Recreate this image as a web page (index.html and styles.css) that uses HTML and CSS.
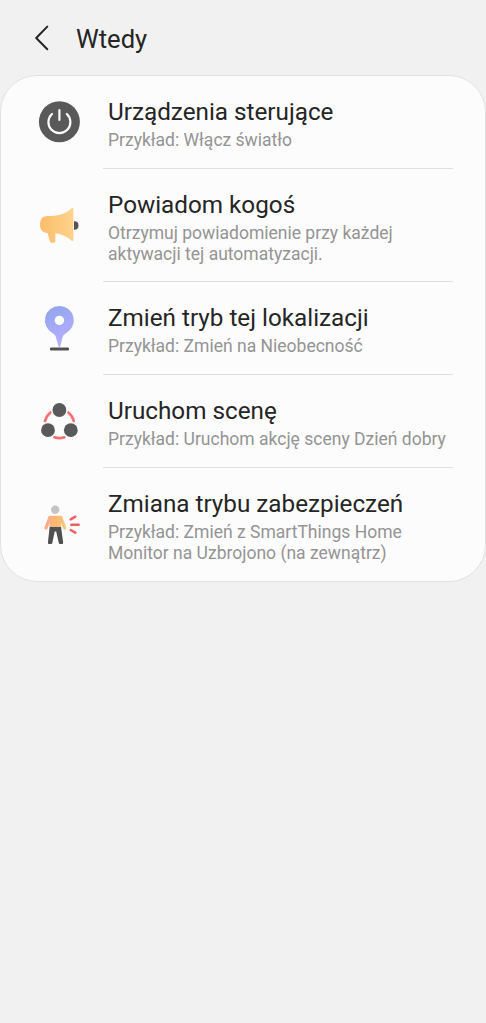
FILE: index.html
```html
<!DOCTYPE html>
<html lang="pl">
<head>
<meta charset="utf-8">
<title>Wtedy</title>
<link rel="stylesheet" href="styles.css">
</head>
<body>
<header class="bar">
  <svg class="back" width="16" height="26" viewBox="0 0 16 26"><path d="M13.3 1.6 2.2 13l11.1 11.2" fill="none" stroke="#252525" stroke-width="2" stroke-linecap="round" stroke-linejoin="round"/></svg>
  <h1 class="heading">Wtedy</h1>
</header>
<main class="card">
  <section class="row">
    <svg class="icon" viewBox="0 2 60 60">
      <circle cx="29.4" cy="31.8" r="20.5" fill="#595959"/>
      <path d="M22 24a11 11 0 1 0 14.800 0M29.400 20v10" fill="none" stroke="#fafafa" stroke-width="2.200" stroke-linecap="round"/>
    </svg>
    <div class="text"><h2 class="title">Urządzenia sterujące</h2><p class="note">Przykład: Włącz światło</p></div>
  </section>
  <section class="row tall">
    <svg class="icon" viewBox="0 0 60 60">
      <defs><linearGradient id="horn" x1="0" y1="0" x2="1" y2="0"><stop offset="0" stop-color="#f9bd6c"/><stop offset="1" stop-color="#ffd38c"/></linearGradient></defs>
      <path d="M44 26.300h.5a4 4.200 0 0 1 0 8.400H44z" fill="#555"/>
      <path d="M17 21c11 0 18-1.500 24.200-7.500 1-.9 2.200-.5 2.200.8v30.500c0 1.300-1.200 1.600-2.200.7-4.300-4-9.500-6.400-15.800-7.300v7.600c0 1.300-.5 1.900-1.800 1.900h-2c-1 0-1.500-.6-1.800-1.500L17.500 38c-5 0-7.500-3.800-7.500-8.500S12.500 21 17 21z" fill="url(#horn)"/>
    </svg>
    <div class="text"><h2 class="title">Powiadom kogoś</h2><p class="note">Otrzymuj powiadomienie przy każdej<br>aktywacji tej automatyzacji.</p></div>
  </section>
  <section class="row">
    <svg class="icon" viewBox="0 0 60 60">
      <defs><linearGradient id="pin" x1="0" y1="0" x2=".3" y2="1"><stop offset="0" stop-color="#8fa5ea"/><stop offset="1" stop-color="#b6adff"/></linearGradient></defs>
      <rect x="20" y="49.600" width="19" height="2.800" rx="1.200" fill="#515151"/>
      <path fill-rule="evenodd" d="M29.400 7.900a14.500 14.500 0 0 1 6.300 27.500c-1.800.9-2.500 1.800-3 3.500l-2.500 9.500c-.3 1-1.300 1-1.600 0l-2.800-9.500c-.5-1.700-1.100-2.600-2.800-3.500A14.500 14.500 0 0 1 29.400 7.900zm0 9.800a4.700 4.700 0 1 0 0 9.400 4.700 4.700 0 0 0 0-9.400z" fill="url(#pin)"/>
    </svg>
    <div class="text"><h2 class="title">Zmień tryb tej lokalizacji</h2><p class="note">Przykład: Zmień na Nieobecność</p></div>
  </section>
  <section class="row">
    <svg class="icon" viewBox="0 -1 60 60">
      <path d="M20.400 20.500a16.200 16.200 0 0 0-5.400 8.600M38.400 20.500a16.200 16.200 0 0 1 5.400 8.600M24.400 45.300q5 1.700 10 0" fill="none" stroke="#f66f73" stroke-width="2.600" stroke-linecap="round"/>
      <g fill="#595959"><circle cx="29.400" cy="18" r="6.900"/><circle cx="18" cy="38.200" r="6.900"/><circle cx="40.800" cy="38.200" r="6.900"/></g>
    </svg>
    <div class="text"><h2 class="title">Uruchom scenę</h2><p class="note">Przykład: Uruchom akcję sceny Dzień dobry</p></div>
  </section>
  <section class="row tall">
    <svg class="icon" viewBox="0 -1 60 60">
      <defs><linearGradient id="torso" gradientUnits="userSpaceOnUse" x1="14" y1="0" x2="37" y2="0"><stop offset="0" stop-color="#fca99a"/><stop offset=".55" stop-color="#fdb96f"/><stop offset="1" stop-color="#fac77e"/></linearGradient></defs>
      <circle cx="25.200" cy="14.800" r="4.200" fill="#c4c4c4"/>
      <path d="M19.700 31.500h11.300l2.200 16.200q0 1.300-1.200 1.300h-2q-1 0-1.200-1.100L26.200 36.500h-1.500l-2.400 11.400q-.2 1.100-1.200 1.100h-2q-1.300 0-1.200-1.300z" fill="#505050"/>
      <path d="M20.700 20.700h9.300q2.200 0 2.900 2L31.100 26.500V32H19.500v-5.500l-1.700-3.800q.7-2 2.900-2z" fill="url(#torso)"/>
      <path d="M19.800 22.700 16 33M30.900 22.700 34.700 33" fill="none" stroke="url(#torso)" stroke-width="3.300" stroke-linecap="round"/>
      <path d="m40.700 24.300 4.600-2.600M41.300 29.800h7.300M40.700 35l4.600 2.600" fill="none" stroke="#f05f61" stroke-width="2.500" stroke-linecap="round"/>
    </svg>
    <div class="text"><h2 class="title">Zmiana trybu zabezpieczeń</h2><p class="note">Przykład: Zmień z SmartThings Home<br>Monitor na Uzbrojono (na zewnątrz)</p></div>
  </section>
</main>
</body>
</html>
```
FILE: styles.css
```css
* { box-sizing: border-box; margin: 0; }
body { background: #f1f1f1; font-family: Roboto, sans-serif; color: #252525; }
.bar { height: 75px; display: flex; align-items: center; gap: 26px; padding: 1px 0 0 34px; }
.back { margin-top: -1px; }
.heading { font-size: 25.6px; font-weight: 400; line-height: 32px; padding-top: 2px; }
.card { background: #fcfcfc; border: 1px solid #e2e2e2; border-radius: 37px; }
.row { display: flex; align-items: flex-start; height: 93px; padding-right: 32px; }
.tall { height: 113px; }
.icon { width: 60px; height: 60px; flex: none; margin: 16px 13px 0 29px; }
.tall .icon { margin-top: 26px; }
.text { flex: 1; height: 100%; padding: 21px 0 0 5px; border-bottom: 1px solid #dfdfdf; }
.row:last-child .text { border: 0; }
.title { font-size: 24.25px; font-weight: 400; line-height: 30px; white-space: nowrap; }
.note { font-size: 17.53px; line-height: 20.5px; margin-top: 3px; color: #949494; white-space: nowrap; }
```
